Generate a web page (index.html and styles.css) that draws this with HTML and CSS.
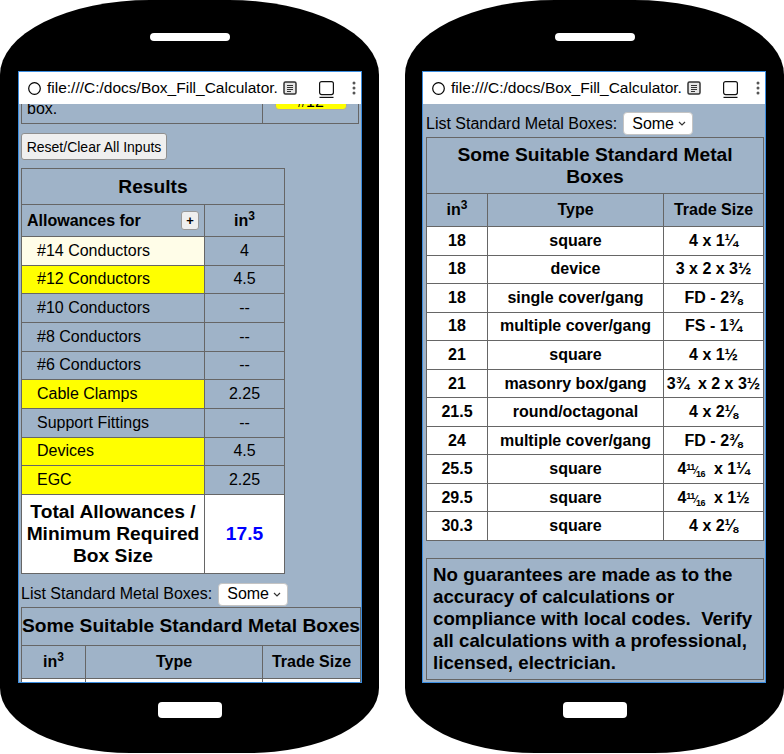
FILE: index.html
```html
<!DOCTYPE html>
<html>
<head>
<meta charset="utf-8">
<title>Box Fill Calculator</title>
<link rel="stylesheet" href="styles.css">
</head>
<body>
<div class="stage">

  <div class="phone phone-left">
    <div class="speaker"></div>
    <div class="screen">
      <div class="urlbar">
        <svg class="ico-circle" width="13" height="13" viewBox="0 0 13 13"><circle cx="6.5" cy="6.5" r="5.8" fill="none" stroke="#000" stroke-width="1.2"/></svg>
        <span class="url">file:///C:/docs/Box_Fill_Calculator.</span>
        <svg class="ico-doc" width="14" height="14" viewBox="0 0 14 14"><rect x="1" y="1" width="12" height="12" rx="1.5" fill="#e6e6e6" stroke="#333" stroke-width="1.5"/><path d="M4 4.5h6M4 6.5h6M4 8.5h6M4 10.5h4" stroke="#333" stroke-width="1"/></svg>
        <svg class="ico-tab" width="15" height="17" viewBox="0 0 15 17"><rect x="0.6" y="0.6" width="13.8" height="13" rx="2" fill="none" stroke="#111" stroke-width="1.2"/><path d="M0.5 16.4h14" stroke="#111" stroke-width="1.2"/></svg>
        <svg class="ico-more" width="4" height="14" viewBox="0 0 4 14"><circle cx="2" cy="2" r="1.5" fill="#555"/><circle cx="2" cy="7" r="1.5" fill="#555"/><circle cx="2" cy="12" r="1.5" fill="#555"/></svg>
      </div>
      <div class="page page-left">
        <table class="inputs">
          <tr>
            <td class="in-lbl">box.</td>
            <td class="in-sel"><span class="ysel">#12</span></td>
          </tr>
        </table>
        <button class="reset" type="button">Reset/Clear All Inputs</button>
        <table class="results">
          <colgroup><col class="c1"><col class="c2"></colgroup>
          <tr class="title"><th colspan="2">Results</th></tr>
          <tr class="head">
            <td><div class="allow"><span>Allowances for</span><span class="plus">+</span></div></td>
            <td class="val">in<sup>3</sup></td>
          </tr>
          <tr class="r"><td class="lbl cream">#14 Conductors</td><td class="val">4</td></tr>
          <tr class="r"><td class="lbl yellow">#12 Conductors</td><td class="val">4.5</td></tr>
          <tr class="r"><td class="lbl">#10 Conductors</td><td class="val">--</td></tr>
          <tr class="r"><td class="lbl">#8 Conductors</td><td class="val">--</td></tr>
          <tr class="r"><td class="lbl">#6 Conductors</td><td class="val">--</td></tr>
          <tr class="r"><td class="lbl yellow">Cable Clamps</td><td class="val">2.25</td></tr>
          <tr class="r"><td class="lbl">Support Fittings</td><td class="val">--</td></tr>
          <tr class="r"><td class="lbl yellow">Devices</td><td class="val">4.5</td></tr>
          <tr class="r"><td class="lbl yellow">EGC</td><td class="val">2.25</td></tr>
          <tr class="total"><td>Total Allowances /<br>Minimum Required<br>Box Size</td><td class="num">17.5</td></tr>
        </table>
        <div class="list-row list-left">
          <span class="list-lbl">List Standard Metal Boxes:</span>
          <span class="select">Some<svg class="chev" width="8" height="5" viewBox="0 0 8 5"><path d="M1 1l3 3 3-3" fill="none" stroke="#333" stroke-width="1.2"/></svg></span>
        </div>
        <table class="boxes boxes-left">
          <colgroup><col class="b1"><col class="b2"><col class="b3"></colgroup>
          <tr class="btitle"><th colspan="3">Some Suitable Standard Metal Boxes</th></tr>
          <tr class="bhead"><th>in<sup>3</sup></th><th>Type</th><th>Trade Size</th></tr>
          <tr class="brow"><td>18</td><td>square</td><td>4 x 1¼</td></tr>
          <tr class="brow"><td>18</td><td>device</td><td>3 x 2 x 3½</td></tr>
        </table>
      </div>
    </div>
    <div class="home"></div>
  </div>

  <div class="phone phone-right">
    <div class="speaker"></div>
    <div class="screen">
      <div class="urlbar">
        <svg class="ico-circle" width="13" height="13" viewBox="0 0 13 13"><circle cx="6.5" cy="6.5" r="5.8" fill="none" stroke="#000" stroke-width="1.2"/></svg>
        <span class="url">file:///C:/docs/Box_Fill_Calculator.</span>
        <svg class="ico-doc" width="14" height="14" viewBox="0 0 14 14"><rect x="1" y="1" width="12" height="12" rx="1.5" fill="#e6e6e6" stroke="#333" stroke-width="1.5"/><path d="M4 4.5h6M4 6.5h6M4 8.5h6M4 10.5h4" stroke="#333" stroke-width="1"/></svg>
        <svg class="ico-tab" width="15" height="17" viewBox="0 0 15 17"><rect x="0.6" y="0.6" width="13.8" height="13" rx="2" fill="none" stroke="#111" stroke-width="1.2"/><path d="M0.5 16.4h14" stroke="#111" stroke-width="1.2"/></svg>
        <svg class="ico-more" width="4" height="14" viewBox="0 0 4 14"><circle cx="2" cy="2" r="1.5" fill="#555"/><circle cx="2" cy="7" r="1.5" fill="#555"/><circle cx="2" cy="12" r="1.5" fill="#555"/></svg>
      </div>
      <div class="page page-right">
        <div class="list-row list-right">
          <span class="list-lbl">List Standard Metal Boxes:</span>
          <span class="select">Some<svg class="chev" width="8" height="5" viewBox="0 0 8 5"><path d="M1 1l3 3 3-3" fill="none" stroke="#333" stroke-width="1.2"/></svg></span>
        </div>
        <table class="boxes boxes-right">
          <colgroup><col class="r1"><col class="r2"><col class="r3"></colgroup>
          <tr class="btitle"><th colspan="3">Some Suitable Standard Metal<br>Boxes</th></tr>
          <tr class="bhead"><th>in<sup>3</sup></th><th>Type</th><th>Trade Size</th></tr>
          <tr class="brow"><td>18</td><td>square</td><td>4 x 1¼</td></tr>
          <tr class="brow"><td>18</td><td>device</td><td>3 x 2 x 3½</td></tr>
          <tr class="brow"><td>18</td><td>single cover/gang</td><td>FD - 2⅜</td></tr>
          <tr class="brow"><td>18</td><td>multiple cover/gang</td><td>FS - 1¾</td></tr>
          <tr class="brow"><td>21</td><td>square</td><td>4 x 1½</td></tr>
          <tr class="brow"><td>21</td><td>masonry box/gang</td><td>3¾&nbsp; x 2 x 3½</td></tr>
          <tr class="brow"><td>21.5</td><td>round/octagonal</td><td>4 x 2⅛</td></tr>
          <tr class="brow"><td>24</td><td>multiple cover/gang</td><td>FD - 2⅜</td></tr>
          <tr class="brow"><td>25.5</td><td>square</td><td>4<span class="fr"><sup>11</sup>&frasl;<sub>16</sub></span>&nbsp; x 1¼</td></tr>
          <tr class="brow"><td>29.5</td><td>square</td><td>4<span class="fr"><sup>11</sup>&frasl;<sub>16</sub></span>&nbsp; x 1½</td></tr>
          <tr class="brow"><td>30.3</td><td>square</td><td>4 x 2⅛</td></tr>
        </table>
        <div class="disclaimer">No guarantees are made as to the accuracy of calculations or compliance with local codes.&nbsp; Verify all calculations with a professional, licensed, electrician.</div>
      </div>
    </div>
    <div class="home"></div>
  </div>

</div>
</body>
</html>
```

FILE: styles.css
```css
* { box-sizing: border-box; }

html, body {
  margin: 0;
  padding: 0;
  background: #fff;
}

body {
  font-family: "Liberation Sans", Arial, sans-serif;
  font-size: 16px;
  color: #000;
}

.stage {
  display: flex;
  gap: 26px;
  width: 784px;
  height: 754px;
  overflow: hidden;
}

/* phone shell */
.phone {
  flex: none;
  width: 379px;
  height: 753px;
  background: #000;
  border-radius: 150px 150px 130px 130px / 75px 75px 65px 65px;
  display: flex;
  flex-direction: column;
  align-items: center;
}

.speaker {
  width: 80px;
  height: 8px;
  margin-top: 33px;
  background: #fff;
  border-radius: 4px;
}

.screen {
  align-self: flex-start;
  width: 344px;
  height: 612px;
  margin-top: 30px;
  border: 1px solid #3b8de0;
  background: #9fb3c8;
  display: flex;
  flex-direction: column;
  overflow: hidden;
}

.phone-left .screen { margin-left: 18px; }
.phone-right .screen { margin-left: 17px; }

.home {
  width: 64px;
  height: 16px;
  margin-top: 19px;
  background: #fff;
  border-radius: 4px;
}

/* address bar */
.urlbar {
  flex: none;
  height: 32px;
  background: #fff;
  display: flex;
  align-items: center;
  padding-left: 9px;
  position: relative;
  z-index: 1;
}

.url {
  flex: none;
  width: 234px;
  margin-left: 6px;
  font-size: 15.5px;
  white-space: nowrap;
}

.ico-doc { margin-left: 2px; }
.ico-tab { margin-left: 22px; margin-top: 3px; }
.ico-more { margin-left: 18px; }

/* page content */
.page {
  flex: 1;
  overflow: hidden;
}

.page-left { padding-left: 2px; }
.page-right { padding-left: 3px; }

table {
  border-collapse: collapse;
  font-size: 16px;
}

/* partially scrolled input table */
.inputs {
  width: 338px;
  margin-top: -27px;
}

.inputs td {
  border: 1px solid #666;
  padding: 22px 5px 5px;
  line-height: 18px;
  vertical-align: bottom;
}

.inputs td.in-sel {
  width: 96px;
  padding-top: 0;
  text-align: center;
}

.ysel {
  display: inline-block;
  width: 72px;
  height: 22px;
  padding-top: 3px;
  line-height: 20px;
  margin-bottom: 8px;
  background: #ff0;
  border: 1px solid #aaa;
  border-radius: 4px;
  text-align: center;
  vertical-align: bottom;
}

.reset {
  display: block;
  width: 146px;
  height: 27px;
  margin-top: 9px;
  padding: 0;
  font-family: "Liberation Sans", Arial, sans-serif;
  font-size: 14px;
  color: #000;
  background: #efefef;
  border: 1px solid #8f8f8f;
  border-radius: 3px;
}

/* results */
.results {
  width: 264px;
  margin-top: 8px;
  table-layout: fixed;
}

.results col.c1 { width: 183px; }

.results td,
.results th {
  border: 1px solid #666;
  padding: 0;
}

.results .title th {
  height: 36px;
  font-size: 19.2px;
}

.results .head td {
  height: 32px;
  font-weight: bold;
}

.allow {
  display: flex;
  align-items: center;
  justify-content: space-between;
  padding: 0 5px 0 5px;
}

.plus {
  width: 18px;
  height: 19px;
  display: flex;
  align-items: center;
  justify-content: center;
  font-size: 13px;
  font-weight: bold;
  background: #efefef;
  border: 1px solid #999;
  border-radius: 3px;
}

sup {
  font-size: 0.75em;
  line-height: 0;
}

.results .r td { height: 28.67px; }

.results td.lbl { padding-left: 15px; }
.results td.val { text-align: center; }

.cream { background: #fffde8; }
.yellow { background: #ff0; }

.results .total td {
  height: 79px;
  background: #fff;
  font-weight: bold;
  font-size: 19.2px;
  line-height: 22px;
  text-align: center;
}

.results .total td.num { color: #00f; }

/* list select */
.list-row {
  display: flex;
  align-items: center;
  gap: 6px;
  height: 23px;
}

.list-left { margin-top: 9px; }
.list-right { margin-top: 8px; }

.select {
  width: 70px;
  height: 23px;
  display: flex;
  align-items: center;
  justify-content: space-between;
  padding: 0 6px 0 8px;
  background: #fff;
  border: 1px solid #c4c4c4;
  border-radius: 4px;
}

/* standard boxes */
.boxes {
  table-layout: fixed;
}

.boxes th,
.boxes td {
  border: 1px solid #666;
  padding: 0;
  text-align: center;
  font-weight: bold;
}

.boxes .btitle th {
  font-size: 19.2px;
  line-height: 22px;
  white-space: nowrap;
}

.boxes .bhead th { height: 33px; }

.boxes .brow td {
  height: 28.55px;
  background: #fff;
  white-space: nowrap;
}

.boxes-left {
  width: 340px;
  margin-top: 1px;
}
.boxes-left col.b1 { width: 64px; }
.boxes-left col.b2 { width: 177px; }
.boxes-left .btitle th { height: 38px; }

.boxes-right {
  width: 338px;
  margin-top: 2px;
}
.boxes-right col.r1 { width: 61px; }
.boxes-right col.r2 { width: 176px; }
.boxes-right .btitle th { height: 56px; }

.fr {
  font-size: 10px;
  letter-spacing: -0.5px;
}

.fr sup,
.fr sub {
  font-size: 9px;
  line-height: 0;
}

.disclaimer {
  width: 338px;
  margin-top: 17px;
  padding: 5px 6px;
  border: 1px solid #666;
  font-size: 18.72px;
  font-weight: bold;
  line-height: 22px;
}
```
